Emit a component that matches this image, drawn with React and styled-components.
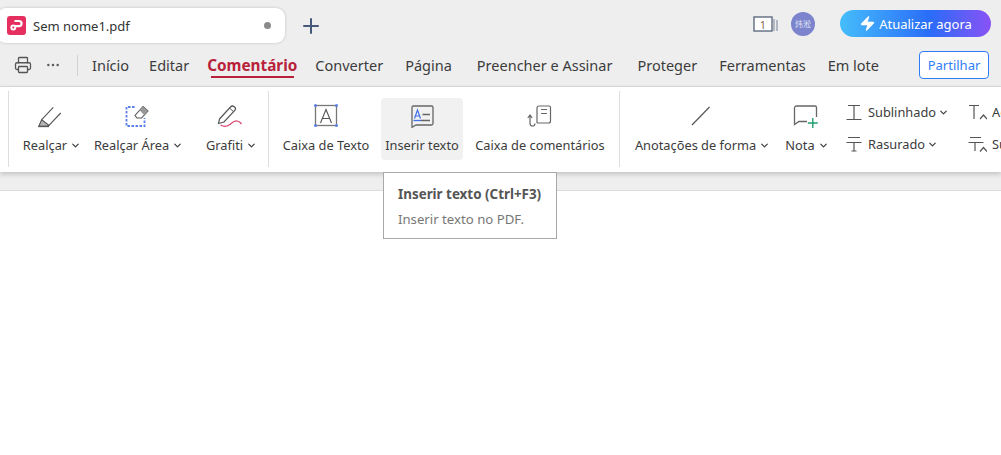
import React from 'react'
import styled, { createGlobalStyle } from 'styled-components'
import { Plus, Zap, Printer, Ellipsis, ChevronDown } from 'lucide-react'

const Global = createGlobalStyle`
html,body{margin:0;padding:0;background:#fff;}
body{font-family:"Noto Sans","Open Sans",sans-serif;overflow:hidden;}
`

function App() {
    return (
        <Page>
            <Global />
            <TabRow>
                <Tab>
                    <AppLogo>
                        <svg width="19" height="19" viewBox="0 0 19 19">
                            <rect width="19" height="19" rx="3" fill="#e5305f" />
                            <path d="M7.500 5h4.500a2.600 2.600 0 0 1 0 5.200H8" fill="none" stroke="#fff" strokeWidth="2.200" />
                            <circle cx="6.300" cy="11.500" r="2" fill="none" stroke="#fff" strokeWidth="1.900" />
                        </svg>
                    </AppLogo>
                    <TabName>Sem nome1.pdf</TabName>
                    <UnsavedDot />
                </Tab>
                <AddTab><Plus size={24} strokeWidth={2} /></AddTab>
                <RightTools>
                    <svg width="26" height="18" viewBox="0 0 26 18">
                        <rect x="1" y="2" width="18" height="14" fill="#fff" stroke="#5f6b80" strokeWidth="1.400" />
                        <path d="M21 4v12M24 5v11" stroke="#a3aab6" strokeWidth="1.600" />
                        <text x="10" y="14" fontSize="11" textAnchor="middle" fill="#8a6a4a">1</text>
                    </svg>
                    <Avatar>炜淞</Avatar>
                    <Upgrade><Zap size={17} fill="#fff" strokeWidth={1} />Atualizar agora</Upgrade>
                </RightTools>
            </TabRow>
            <MenuRow>
                <QuickIcon><Printer size={18} strokeWidth={1.7} /></QuickIcon>
                <QuickIcon><Ellipsis size={16} strokeWidth={1.6} /></QuickIcon>
                <MenuDivider />
                <MenuItem $gap={20}>Início</MenuItem>
                <MenuItem $gap={18}>Editar</MenuItem>
                <MenuItem $gap={18} $active>Comentário</MenuItem>
                <MenuItem $gap={22}>Converter</MenuItem>
                <MenuItem $gap={25}>Página</MenuItem>
                <MenuItem $gap={25}>Preencher e Assinar</MenuItem>
                <MenuItem $gap={22}>Proteger</MenuItem>
                <MenuItem $gap={22}>Ferramentas</MenuItem>
                <MenuItem>Em lote</MenuItem>
                <ShareButton>Partilhar</ShareButton>
            </MenuRow>
            <Ribbon>
                <Group $width={260} $pad={11}>
                    <RibbonButton $width={60}>
                        <IconBox>
                            <svg width="26" height="24" viewBox="0 0 26 24" fill="none" stroke="#555" strokeWidth="1.100">
                                <path d="M16.300 3.300 4.700 15.700M23.700 9 12 21.300" />
                                <path d="M4.700 15.700 12 21.300l-2 1H1.800z" fill="#b5b5b5" />
                                <path d="M1.300 22.500H12" strokeWidth="1.300" />
                            </svg>
                        </IconBox>
                        <Label>Realçar<Caret /></Label>
                    </RibbonButton>
                    <RibbonButton $width={113}>
                        <IconBox>
                            <svg width="24" height="24" viewBox="0 0 24 24" fill="none">
                                <path d="M9.500 3H1.500v19h18v-8" stroke="#5b7fe8" strokeWidth="1.800" strokeDasharray="2.500 1.500" />
                                <path d="M18 2.500 23 7l-6.500 7H12l-2-2.500z" stroke="#555" strokeWidth="1.100" />
                                <path d="M18 2.500 23 7l-3.800 4-4.700-4.700z" fill="#999" />
                            </svg>
                        </IconBox>
                        <Label>Realçar Área<Caret /></Label>
                    </RibbonButton>
                    <RibbonButton $width={73}>
                        <IconBox>
                            <svg width="26" height="24" viewBox="0 0 26 24" fill="none">
                                <path d="M2.500 15 13.500 3c1-1.200 2.500-1.200 3.800-.2s1.500 2.300.7 3.400L7 18l-5.500 1.500z" stroke="#555" strokeWidth="1.200" />
                                <path d="M13 4.500l4 3.500" stroke="#555" strokeWidth="1" />
                                <path d="M3.500 21c3.500 2 5.500 2 8.500 0s5-4.500 8-4 3 1.500 4.500 3" stroke="#d6406a" strokeWidth="1.200" />
                            </svg>
                        </IconBox>
                        <Label>Grafiti<Caret /></Label>
                    </RibbonButton>
                </Group>
                <Group $width={351} $pad={9}>
                    <RibbonButton $width={96} $mr={7}>
                        <IconBox>
                            <svg width="26" height="24" viewBox="0 0 26 24" fill="none">
                                <rect x="2.500" y="1.500" width="21" height="20" stroke="#777" strokeWidth="1.300" />
                                <path d="M7.500 19 13 5.500 18.500 19M9.500 14.500h7" stroke="#555" strokeWidth="1.100" />
                                <g fill="#5b7fe8">
                                    <circle cx="2.500" cy="1.500" r="1.500" /><circle cx="23.500" cy="1.500" r="1.500" />
                                    <circle cx="2.500" cy="21.500" r="1.500" /><circle cx="23.500" cy="21.500" r="1.500" />
                                </g>
                            </svg>
                        </IconBox>
                        <Label>Caixa de Texto</Label>
                    </RibbonButton>
                    <RibbonButton $width={82} $mr={7} $hovered>
                        <IconBox>
                            <svg width="24" height="24" viewBox="0 0 24 24" fill="none">
                                <path d="M2 3.500a1.500 1.500 0 0 1 1.500-1.500h18a1.500 1.500 0 0 1 1.500 1.500v16a1.500 1.500 0 0 1-1.500 1.500H6l-4 2.300z" stroke="#666" strokeWidth="1.300" />
                                <path d="M4.500 14.500 7.500 6l3 8.500M5.500 12h4" stroke="#3f6fe8" strokeWidth="1.200" />
                                <path d="M3.500 16.500h7.500" stroke="#3f6fe8" strokeWidth="1.300" />
                                <path d="M11 16.500h9M12.500 10.500h7.500" stroke="#666" strokeWidth="1.300" />
                            </svg>
                        </IconBox>
                        <Label>Inserir texto</Label>
                    </RibbonButton>
                    <RibbonButton $width={140}>
                        <IconBox>
                            <svg width="26" height="24" viewBox="0 0 26 24" fill="none" stroke="#666" strokeWidth="1.200">
                                <path d="M10 19V4a2 2 0 0 1 2-2h10a1.500 1.500 0 0 1 1.500 1.500V17a2 2 0 0 1-2 2H10" />
                                <path d="M14 5.500h6M14 9.500h6" />
                                <path d="M.8 14 3 11l2.200 3M3 11v8.500a2.500 2.500 0 0 0 5 0" />
                            </svg>
                        </IconBox>
                        <Label>Caixa de comentários</Label>
                    </RibbonButton>
                </Group>
                <Group $pad={7} $fill>
                    <RibbonButton $width={147}>
                        <IconBox>
                            <svg width="24" height="24" viewBox="0 0 24 24" fill="none">
                                <path d="M3 21 20.500 3" stroke="#555" strokeWidth="1.200" />
                            </svg>
                        </IconBox>
                        <Label>Anotações de forma<Caret /></Label>
                    </RibbonButton>
                    <RibbonButton $width={62}>
                        <IconBox>
                            <svg width="26" height="24" viewBox="0 0 26 24" fill="none">
                                <path d="M15 17.500H7l-4.500 3V4a2 2 0 0 1 2-2h18.500a1.500 1.500 0 0 1 1.500 1.500V13" stroke="#666" strokeWidth="1.300" />
                                <path d="M20.800 14v10M15.800 19h10" stroke="#20a070" strokeWidth="1.400" />
                            </svg>
                        </IconBox>
                        <Label>Nota<Caret /></Label>
                    </RibbonButton>
                    <SmallColumn $width={122} $pad={10}>
                        <SmallRow $gap={6}>
                            <svg width="16" height="17" viewBox="0 0 16 17" fill="none" stroke="#555" strokeWidth="1.200">
                                <path d="M2 1.500h12M8 1.500V15M.5 15.500h15" />
                            </svg>
                            <SmallText>Sublinhado<Caret $gap={2} /></SmallText>
                        </SmallRow>
                        <SmallRow $gap={6}>
                            <svg width="16" height="17" viewBox="0 0 16 17" fill="none" stroke="#555" strokeWidth="1.200">
                                <path d="M2 1.500h12M.5 6.500h15M8 6.500V15M5.500 15h5" />
                            </svg>
                            <SmallText>Rasurado<Caret $gap={2} /></SmallText>
                        </SmallRow>
                    </SmallColumn>
                    <SmallColumn $pad={10}>
                        <SmallRow $gap={5}>
                            <svg width="19" height="17" viewBox="0 0 19 17" fill="none" stroke="#555" strokeWidth="1.200">
                                <path d="M1 1.500h10M6 1.500V15M12 15l3.500-4 3.500 4" />
                            </svg>
                            <SmallText>Acrescentar</SmallText>
                        </SmallRow>
                        <SmallRow $gap={5}>
                            <svg width="19" height="17" viewBox="0 0 19 17" fill="none" stroke="#555" strokeWidth="1.200">
                                <path d="M2 1.500h11M.5 6.500h15M7 6.500V15M12 15.500l3.500-4 3.500 4" />
                            </svg>
                            <SmallText>Substituir</SmallText>
                        </SmallRow>
                    </SmallColumn>
                </Group>
            </Ribbon>
            <Strip />
            <Tooltip>
                <TipTitle>Inserir texto (Ctrl+F3)</TipTitle>
                <TipText>Inserir texto no PDF.</TipText>
            </Tooltip>
        </Page>
    )
}

export default App

const CaretIcon = styled(ChevronDown)`
margin-left:${p => p.$gap}px;
margin-right:-4px;
flex-shrink:0;
`

const Caret = ({ $gap = 3 }) => <CaretIcon size={11} strokeWidth={2.6} $gap={$gap} />

const Page = styled.div`
position:relative;
width:1001px;
height:455px;
overflow:hidden;
background:#fff;
color:#3c3c3c;
font-size:13px;
`

const TabRow = styled.div`
height:48px;
background:#eeeeee;
display:flex;
align-items:center;
padding-top:3px;
box-sizing:border-box;
`

const Tab = styled.div`
width:288px;
height:35px;
margin-left:-3px;
background:#fff;
border-radius:9px;
box-shadow:0 0 3px rgba(0,0,0,.2);
display:flex;
align-items:center;
padding:0 14px 0 10px;
box-sizing:border-box;
`

const AppLogo = styled.div`
width:19px;
height:19px;
margin-right:7px;
`

const TabName = styled.span`
flex:1;
font-size:13px;
color:#333;
`

const UnsavedDot = styled.span`
width:7px;
height:7px;
border-radius:50%;
background:#8a8a8a;
`

const AddTab = styled.div`
margin-left:14px;
display:flex;
color:#46597a;
`

const RightTools = styled.div`
margin-left:auto;
margin-right:10px;
margin-bottom:4px;
display:flex;
align-items:center;
`

const Avatar = styled.div`
width:24px;
height:24px;
margin-left:12px;
border-radius:50%;
background:#7b84cc;
color:#dfe2f5;
font-size:8px;
font-family:"Noto Sans CJK SC",sans-serif;
display:flex;
align-items:center;
justify-content:center;
`

const Upgrade = styled.div`
width:151px;
height:27px;
margin-left:25px;
border-radius:14px;
background:linear-gradient(90deg,#45bdfb 0%,#2a6cf8 60%,#8a52f6 100%);
color:#fff;
font-size:13px;
display:flex;
align-items:center;
justify-content:center;
gap:3px;
`

const MenuRow = styled.div`
height:39px;
background:#eeeeee;
border-bottom:1px solid #dcdcdc;
display:flex;
align-items:center;
padding:0 12px 4px 14px;
box-sizing:border-box;
`

const QuickIcon = styled.div`
display:flex;
margin-right:13px;
color:#555;
&:nth-child(2){margin-right:0;}
`

const MenuDivider = styled.div`
width:1px;
height:21px;
background:#d2d2d2;
margin:0 14px 0 16px;
`

const MenuItem = styled.div`
position:relative;
font-size:${p => p.$active ? '15.3px' : '14.5px'};
margin-right:${p => p.$gap || 0}px;
font-weight:${p => p.$active ? 700 : 400};
color:${p => p.$active ? '#b8213a' : '#3c3c3c'};
white-space:nowrap;
${p => p.$active && `
&:after{
    content:"";
    position:absolute;
    left:4px;
    right:3px;
    bottom:-3px;
    height:2px;
    background:#b8213a;
}`}
`

const ShareButton = styled.div`
margin-left:auto;
width:70px;
height:28px;
border:1px solid #2f7df6;
border-radius:4px;
background:#fff;
color:#2f7df6;
font-size:13px;
display:flex;
align-items:center;
justify-content:center;
box-sizing:border-box;
`

const Ribbon = styled.div`
height:85px;
background:#fff;
display:flex;
padding:4px 0 5px 8px;
box-sizing:border-box;
overflow:hidden;
box-shadow:0 2px 5px rgba(0,0,0,.2);
position:relative;
`

const Group = styled.div`
${p => p.$width ? `width:${p.$width}px;` : ''}
${p => p.$fill ? 'flex:1;min-width:0;' : 'flex-shrink:0;'}
border-left:1px solid #dedede;
display:flex;
align-items:flex-start;
padding:7px 0 0 ${p => p.$pad}px;
box-sizing:border-box;
`

const RibbonButton = styled.div`
width:${p => p.$width}px;
height:62px;
margin-right:${p => p.$mr || 0}px;
flex-shrink:0;
border-radius:4px;
background:${p => p.$hovered ? '#f1f1f1' : 'transparent'};
display:flex;
flex-direction:column;
align-items:center;
`

const IconBox = styled.div`
height:24px;
margin-top:6px;
display:flex;
`

const Label = styled.div`
margin-top:8px;
font-size:12.8px;
color:#3c3c3c;
white-space:nowrap;
display:flex;
align-items:center;
`

const SmallColumn = styled.div`
${p => p.$width ? `width:${p.$width}px;` : ''}
flex-shrink:0;
display:flex;
flex-direction:column;
gap:13px;
padding-top:4px;
padding-left:${p => p.$pad}px;
box-sizing:border-box;
`

const SmallRow = styled.div`
display:flex;
align-items:center;
gap:${p => p.$gap}px;
height:19px;
svg:first-child{margin-top:2px;}
`

const SmallText = styled.span`
display:flex;
align-items:center;
font-size:12.8px;
white-space:nowrap;
`

const Strip = styled.div`
height:18px;
background:#eeeeee;
border-bottom:1px solid #dcdcdc;
`

const Tooltip = styled.div`
position:absolute;
left:383px;
top:172px;
width:174px;
height:67px;
background:#fff;
border:1px solid #a8a8a8;
box-sizing:border-box;
padding:12px 14px;
z-index:2;
`

const TipTitle = styled.div`
font-size:13.4px;
font-weight:700;
color:#555;
white-space:nowrap;
`

const TipText = styled.div`
margin-top:7px;
font-size:13.2px;
color:#777;
white-space:nowrap;
`
